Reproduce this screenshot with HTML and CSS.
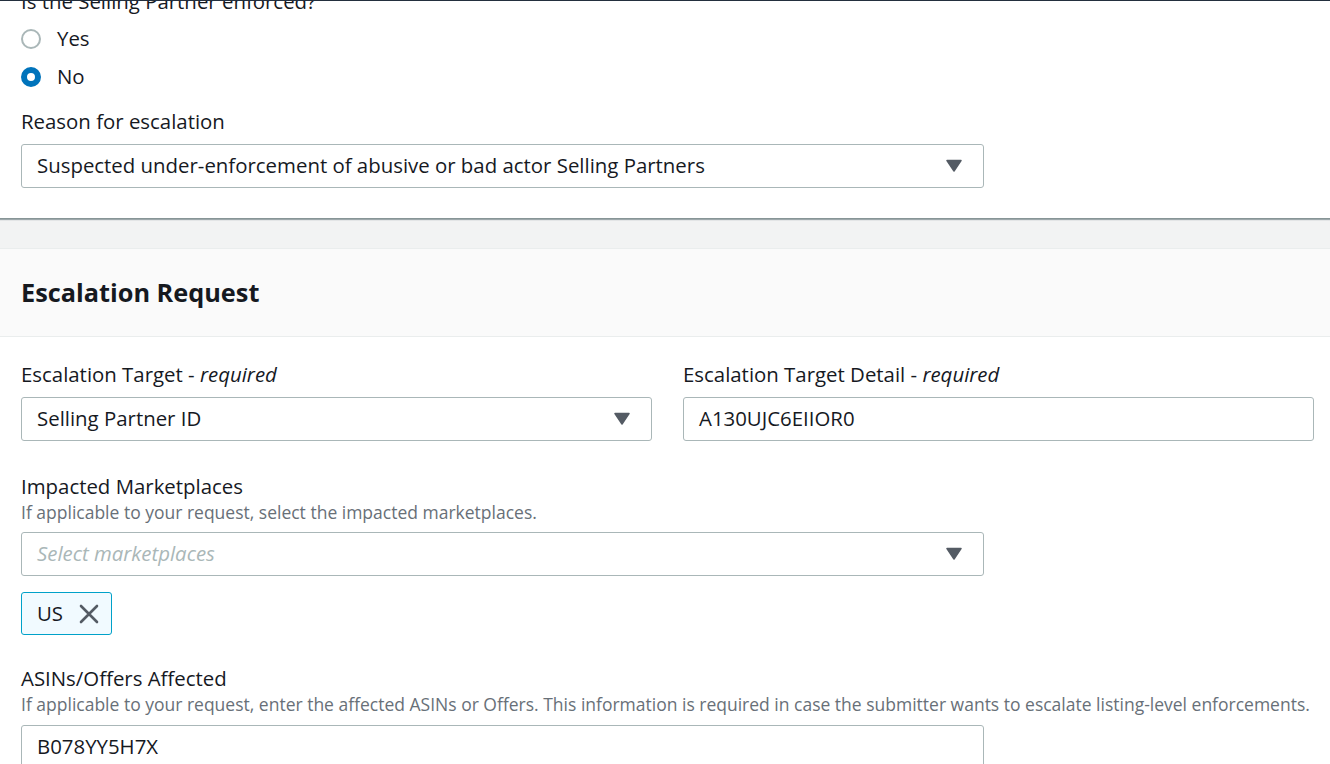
FILE: index.html
```html
<!DOCTYPE html>
<html lang="en">
<head>
<meta charset="utf-8">
<title>Escalation</title>
<link rel="stylesheet" href="styles.css">
</head>
<body>
  <section class="panel panel-top">
    <div class="field">
      <div class="label">Is the Selling Partner enforced?</div>
      <div class="radio-group">
        <label class="radio"><span class="radio-dot"></span><span class="radio-text">Yes</span></label>
        <label class="radio"><span class="radio-dot checked"></span><span class="radio-text">No</span></label>
      </div>
    </div>
    <div class="field field-reason">
      <div class="label">Reason for escalation</div>
      <div class="control select wide">
        <span class="value">Suspected under-enforcement of abusive or bad actor Selling Partners</span>
        <svg class="caret" width="16" height="13" viewBox="0 0 16 13"><path d="M1 1.5 H15 L8 12 Z" fill="#545b64" stroke="#545b64" stroke-width="1.5" stroke-linejoin="round"/></svg>
      </div>
    </div>
  </section>

  <section class="panel panel-main">
    <header class="panel-header">
      <h2>Escalation Request</h2>
    </header>
    <div class="panel-body">
      <div class="grid-2">
        <div class="field">
          <div class="label">Escalation Target - <i>required</i></div>
          <div class="control select">
            <span class="value">Selling Partner ID</span>
            <svg class="caret" width="16" height="13" viewBox="0 0 16 13"><path d="M1 1.5 H15 L8 12 Z" fill="#545b64" stroke="#545b64" stroke-width="1.5" stroke-linejoin="round"/></svg>
          </div>
        </div>
        <div class="field">
          <div class="label">Escalation Target Detail - <i>required</i></div>
          <div class="control input">
            <span class="value">A130UJC6EIIOR0</span>
          </div>
        </div>
      </div>

      <div class="field spaced">
        <div class="label">Impacted Marketplaces</div>
        <div class="desc">If applicable to your request, select the impacted marketplaces.</div>
        <div class="control select wide">
          <span class="value placeholder">Select marketplaces</span>
          <svg class="caret" width="16" height="13" viewBox="0 0 16 13"><path d="M1 1.5 H15 L8 12 Z" fill="#545b64" stroke="#545b64" stroke-width="1.5" stroke-linejoin="round"/></svg>
        </div>
        <div class="tokens">
          <div class="token">
            <span class="token-text">US</span>
            <svg class="token-x" width="20" height="20" viewBox="0 0 20 20"><path d="M2 2 L18 18 M18 2 L2 18" stroke="#545b64" stroke-width="2.6" stroke-linecap="round" fill="none"/></svg>
          </div>
        </div>
      </div>

      <div class="field spaced-sm">
        <div class="label">ASINs/Offers Affected</div>
        <div class="desc desc-last">If applicable to your request, enter the affected ASINs or Offers. This information is required in case the submitter wants to escalate listing-level enforcements.</div>
        <div class="control input wide">
          <span class="value">B078YY5H7X</span>
        </div>
      </div>
    </div>
  </section>
</body>
</html>
```

FILE: styles.css
```css
* { box-sizing: border-box; }

html, body { height: 100%; }

body {
  margin: 0;
  background: #f2f3f3;
  border-top: 1px solid #232f3e;
  font-family: "Open Sans", "Noto Sans", sans-serif;
  font-size: 20.4px;
  color: #16191f;
  overflow: hidden;
}

.panel {
  background: #ffffff;
}

.panel-top {
  margin-top: -14px;
  padding: 0 16px 30px 21px;
  border-bottom: 1px solid #879596;
  box-shadow: 0 1px 1px rgba(0, 28, 36, 0.35);
}

.panel-main {
  margin-top: 29px;
  border-top: 1px solid #eaeded;
  min-height: 600px;
}

.label {
  line-height: 28px;
}

.label i { font-style: italic; }

.desc {
  font-size: 17.5px;
  line-height: 24px;
  color: #687078;
  margin-bottom: 8px;
  white-space: nowrap;
}

.desc-last {
  margin-bottom: 9px;
}

.radio-group {
  display: flex;
  flex-direction: column;
  gap: 8px;
  margin-top: 9px;
}

.radio {
  display: flex;
  align-items: center;
  gap: 16px;
  height: 30px;
  line-height: 28px;
}

.radio-text {
  padding-bottom: 2px;
}

.radio-dot {
  width: 20px;
  height: 20px;
  border-radius: 50%;
  border: 2px solid #aab7b8;
  background: #fff;
}

.radio-dot.checked {
  border: 6px solid #0073bb;
}

.field-reason {
  margin-top: 15px;
}

.field-reason .label,
.panel-body .label {
  margin-bottom: 9px;
}

.panel-body .field.spaced .label,
.panel-body .field.spaced-sm .label {
  margin-bottom: 0;
}

.control {
  height: 44px;
  border: 1px solid #aab7b8;
  border-radius: 3px;
  background: #fff;
  display: flex;
  align-items: center;
  justify-content: space-between;
  padding: 0 21px 2px 15px;
}

.control.wide {
  width: 963px;
}

.value {
  white-space: nowrap;
}

.placeholder {
  color: #aab7b8;
  font-style: italic;
}

.caret {
  flex: none;
}

.panel-header {
  background: #fafafa;
  border-bottom: 1px solid #eaeded;
  padding: 0 16px 2px 21px;
  height: 88px;
  display: flex;
  align-items: center;
}

.panel-header h2 {
  margin: 0;
  font-size: 25.3px;
  font-weight: 700;
  line-height: 32px;
}

.panel-body {
  padding: 23px 16px 40px 21px;
}

.grid-2 {
  display: grid;
  grid-template-columns: 1fr 1fr;
  column-gap: 31px;
}

.spaced {
  margin-top: 31px;
}

.spaced-sm {
  margin-top: 29px;
}

.tokens {
  display: flex;
  margin-top: 16px;
}

.token {
  display: flex;
  align-items: center;
  gap: 16px;
  height: 43px;
  padding: 0 12px 0 15px;
  background: #f1faff;
  border: 1px solid #00a1c9;
  border-radius: 3px;
}

.token-text {
  padding-bottom: 2px;
}
```
